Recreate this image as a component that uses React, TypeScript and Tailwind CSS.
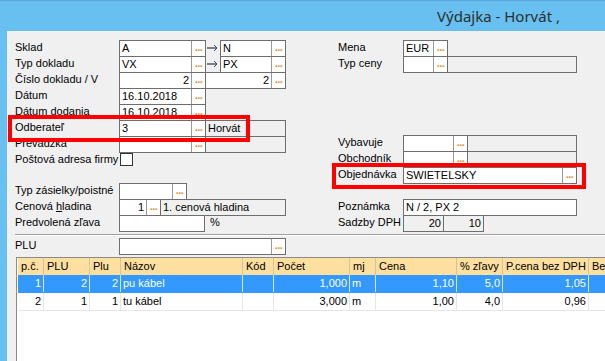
import React from 'react';

const font = "font-['Liberation_Sans',Arial,sans-serif]";

const Btn = () => (
  <span className="flex w-[14px] shrink-0 items-end justify-center border-l border-[#9a9a9a] pb-[3px] text-[11px] font-bold leading-none tracking-[-0.5px] text-[#e0902a]">
    ...
  </span>
);

function Field({
  className = '',
  value = '',
  right = false,
  btn = true,
}: {
  className?: string;
  value?: string;
  right?: boolean;
  btn?: boolean;
}) {
  return (
    <div className={`flex h-[17px] shrink-0 border border-[#6e6e6e] bg-white ${className}`}>
      <span className={`flex-1 overflow-hidden whitespace-nowrap px-[2px] leading-[15px] ${right ? 'text-right' : ''}`}>
        {value}
      </span>
      {btn && <Btn />}
    </div>
  );
}

function Gray({ className = '', value = '', right = false }: { className?: string; value?: string; right?: boolean }) {
  return (
    <div
      className={`h-[17px] shrink-0 overflow-hidden whitespace-nowrap border border-[#6e6e6e] bg-[#f0f0f0] px-[2px] leading-[15px] ${right ? 'text-right' : ''} ${className}`}
    >
      {value}
    </div>
  );
}

const Arrow = () => (
  <span className="flex h-4 w-[14px] shrink-0 items-center justify-center">
    <svg width="12" height="8" viewBox="0 0 12 8">
      <path d="M0 4h10" stroke="#111" strokeWidth="1" />
      <path d="M7 1l3 3-3 3" stroke="#1a4fa0" strokeWidth="1" fill="none" />
    </svg>
  </span>
);

function Row({ label, wide = true, children }: { label: React.ReactNode; wide?: boolean; children?: React.ReactNode }) {
  return (
    <div className="flex h-4 items-start">
      <span className={`${wide ? 'w-[104px]' : 'w-[65px]'} shrink-0 whitespace-nowrap leading-[15px]`}>{label}</span>
      {children}
    </div>
  );
}

const cols = [
  { h: 'p.č.', w: 'w-[26px]', r: true },
  { h: 'PLU', w: 'w-[46px]', r: true },
  { h: 'Plu', w: 'w-[31px]', r: true },
  { h: 'Názov', w: 'w-[122px]', r: false },
  { h: 'Kód', w: 'w-[31px]', r: false },
  { h: 'Počet', w: 'w-[76px]', r: true },
  { h: 'mj', w: 'w-[26px]', r: false },
  { h: 'Cena', w: 'w-[81px]', r: true },
  { h: '% zľavy', w: 'w-[46px]', r: true },
  { h: 'P.cena bez DPH', w: 'w-[86px]', r: true },
  { h: 'Bez', w: 'w-[80px]', r: true },
];

const rows = [
  ['1', '2', '2', 'pu kábel', '', '1,000', 'm', '1,10', '5,0', '1,05', ''],
  ['2', '1', '1', 'tu kábel', '', '3,000', 'm', '1,00', '4,0', '0,96', ''],
];

export default function App() {
  return (
    <div className={`relative flex h-[361px] w-[605px] flex-col overflow-hidden bg-[#f0f0f0] text-[11px] text-black ${font}`}>
      {/* title bar */}
      <div className="flex h-[31px] shrink-0 items-center border-t border-[#5aa8d8] bg-[#67c0ef] pl-[437px]">
        <span className="font-['Noto_Sans',sans-serif] text-[15px] text-[#2e2e2e]">Výdajka - Horvát ,</span>
      </div>

      <div className="flex flex-1">
        <div className="w-[7px] shrink-0 bg-[#67c0ef]" />

        <div className="flex flex-1 flex-col pt-[9px]">
          {/* form */}
          <div className="flex pl-[8px]">
            <div className="flex w-[323px] shrink-0 flex-col">
              <Row label="Sklad">
                <Field className="w-[87px]" value="A" />
                <Arrow />
                <Field className="w-[66px]" value="N" />
              </Row>
              <Row label="Typ dokladu">
                <Field className="w-[87px]" value="VX" />
                <Arrow />
                <Field className="w-[66px]" value="PX" />
              </Row>
              <Row label="Číslo dokladu / V">
                <Field className="w-[87px]" value="2" right />
                <Field className="-ml-px w-[81px]" value="2" right />
              </Row>
              <Row label="Dátum">
                <Field className="w-[87px]" value="16.10.2018" />
              </Row>
              <Row label="Dátum dodania">
                <Field className="w-[87px]" value="16.10.2018" />
              </Row>
              <Row label="Odberateľ">
                <Field className="w-[87px]" value="3" />
                <Gray className="-ml-px w-[81px]" value="Horvát" />
              </Row>
              <Row label="Prevádzka">
                <Field className="w-[87px]" />
                <Gray className="-ml-px w-[81px]" />
              </Row>
              <Row label="Poštová adresa firmy">
                <span className="ml-px mt-px h-[13px] w-[13px] border border-[#333] bg-white" />
              </Row>
              <div className="h-[15px]" />
              <Row label="Typ zásielky/poistné">
                <Field className="w-[68px]" />
              </Row>
              <Row
                label={
                  <>
                    Cenová <span className="underline">h</span>ladina
                  </>
                }
              >
                <Field className="w-[42px]" value="1" right />
                <Gray className="-ml-px w-[126px]" value="1. cenová hladina" />
              </Row>
              <Row label="Predvolená zľava">
                <Field className="w-[86px]" btn={false} />
                <span className="ml-[5px] leading-[15px]">%</span>
              </Row>
            </div>

            <div className="flex flex-1 flex-col">
              <Row label="Mena" wide={false}>
                <Field className="w-[45px]" value="EUR" />
              </Row>
              <Row label="Typ ceny" wide={false}>
                <Field className="w-[45px]" />
                <Gray className="-ml-px w-[130px]" />
              </Row>
              <div className="h-[63px]" />
              <Row label="Vybavuje" wide={false}>
                <Field className="w-[65px]" />
                <Gray className="-ml-px w-[110px]" />
              </Row>
              <Row label="Obchodník" wide={false}>
                <Field className="w-[65px]" />
                <Gray className="-ml-px w-[110px]" />
              </Row>
              <Row label="Objednávka" wide={false}>
                <Field className="w-[174px]" value="SWIETELSKY" />
              </Row>
              <div className="h-4" />
              <Row label="Poznámka" wide={false}>
                <Field className="w-[174px]" value="N / 2, PX 2" btn={false} />
              </Row>
              <Row label="Sadzby DPH" wide={false}>
                <Gray className="w-[41px]" value="20" right />
                <Gray className="-ml-px w-[41px]" value="10" right />
              </Row>
            </div>
          </div>

          {/* separator */}
          <div className="ml-[8px] mt-[3px] border-t border-b border-t-[#a0a0a0] border-b-white" />

          {/* PLU */}
          <div className="mt-[2px] pl-[8px]">
            <Row label="PLU">
              <Field className="w-[167px]" />
            </Row>
          </div>

          {/* grid */}
          <div className="ml-[9px] mt-[3px] flex flex-1 flex-col border-l border-t border-[#8a8a8a] bg-white pl-px">
            <div className="flex h-[17px] shrink-0">
              {cols.map((c) => (
                <div
                  key={c.h}
                  className={`${c.w} shrink-0 overflow-hidden whitespace-nowrap border-r border-[#cfc3a8] bg-[#fddf9f] px-[3px] leading-[17px]`}
                >
                  {c.h}
                </div>
              ))}
            </div>
            {rows.map((r, i) => (
              <div
                key={i}
                className={`relative flex h-[18px] shrink-0 border-b ${i === 0 ? 'border-[#3399ff] bg-[#3399ff] text-white' : 'border-[#e6e6e6]'}`}
              >
                {i === 0 && <span className="absolute -left-[2px] top-0 h-full w-px border-y-2 border-[#e8802c]" />}
                {r.map((v, j) => (
                  <div
                    key={j}
                    className={`${cols[j].w} shrink-0 overflow-hidden whitespace-nowrap border-r px-[2px] leading-[17px] ${cols[j].r ? 'text-right' : ''} ${i === 0 ? 'border-[#d6eaff]' : 'border-[#e6e6e6]'}`}
                  >
                    {v}
                  </div>
                ))}
              </div>
            ))}
          </div>
        </div>
      </div>

      {/* highlight frames */}
      <div className="pointer-events-none absolute left-[8px] top-[115px] h-[27px] w-[242px] border-4 border-[#ff0000]" />
      <div className="pointer-events-none absolute left-[332px] top-[163px] h-[26px] w-[254px] border-4 border-[#ff0000]" />
    </div>
  );
}
